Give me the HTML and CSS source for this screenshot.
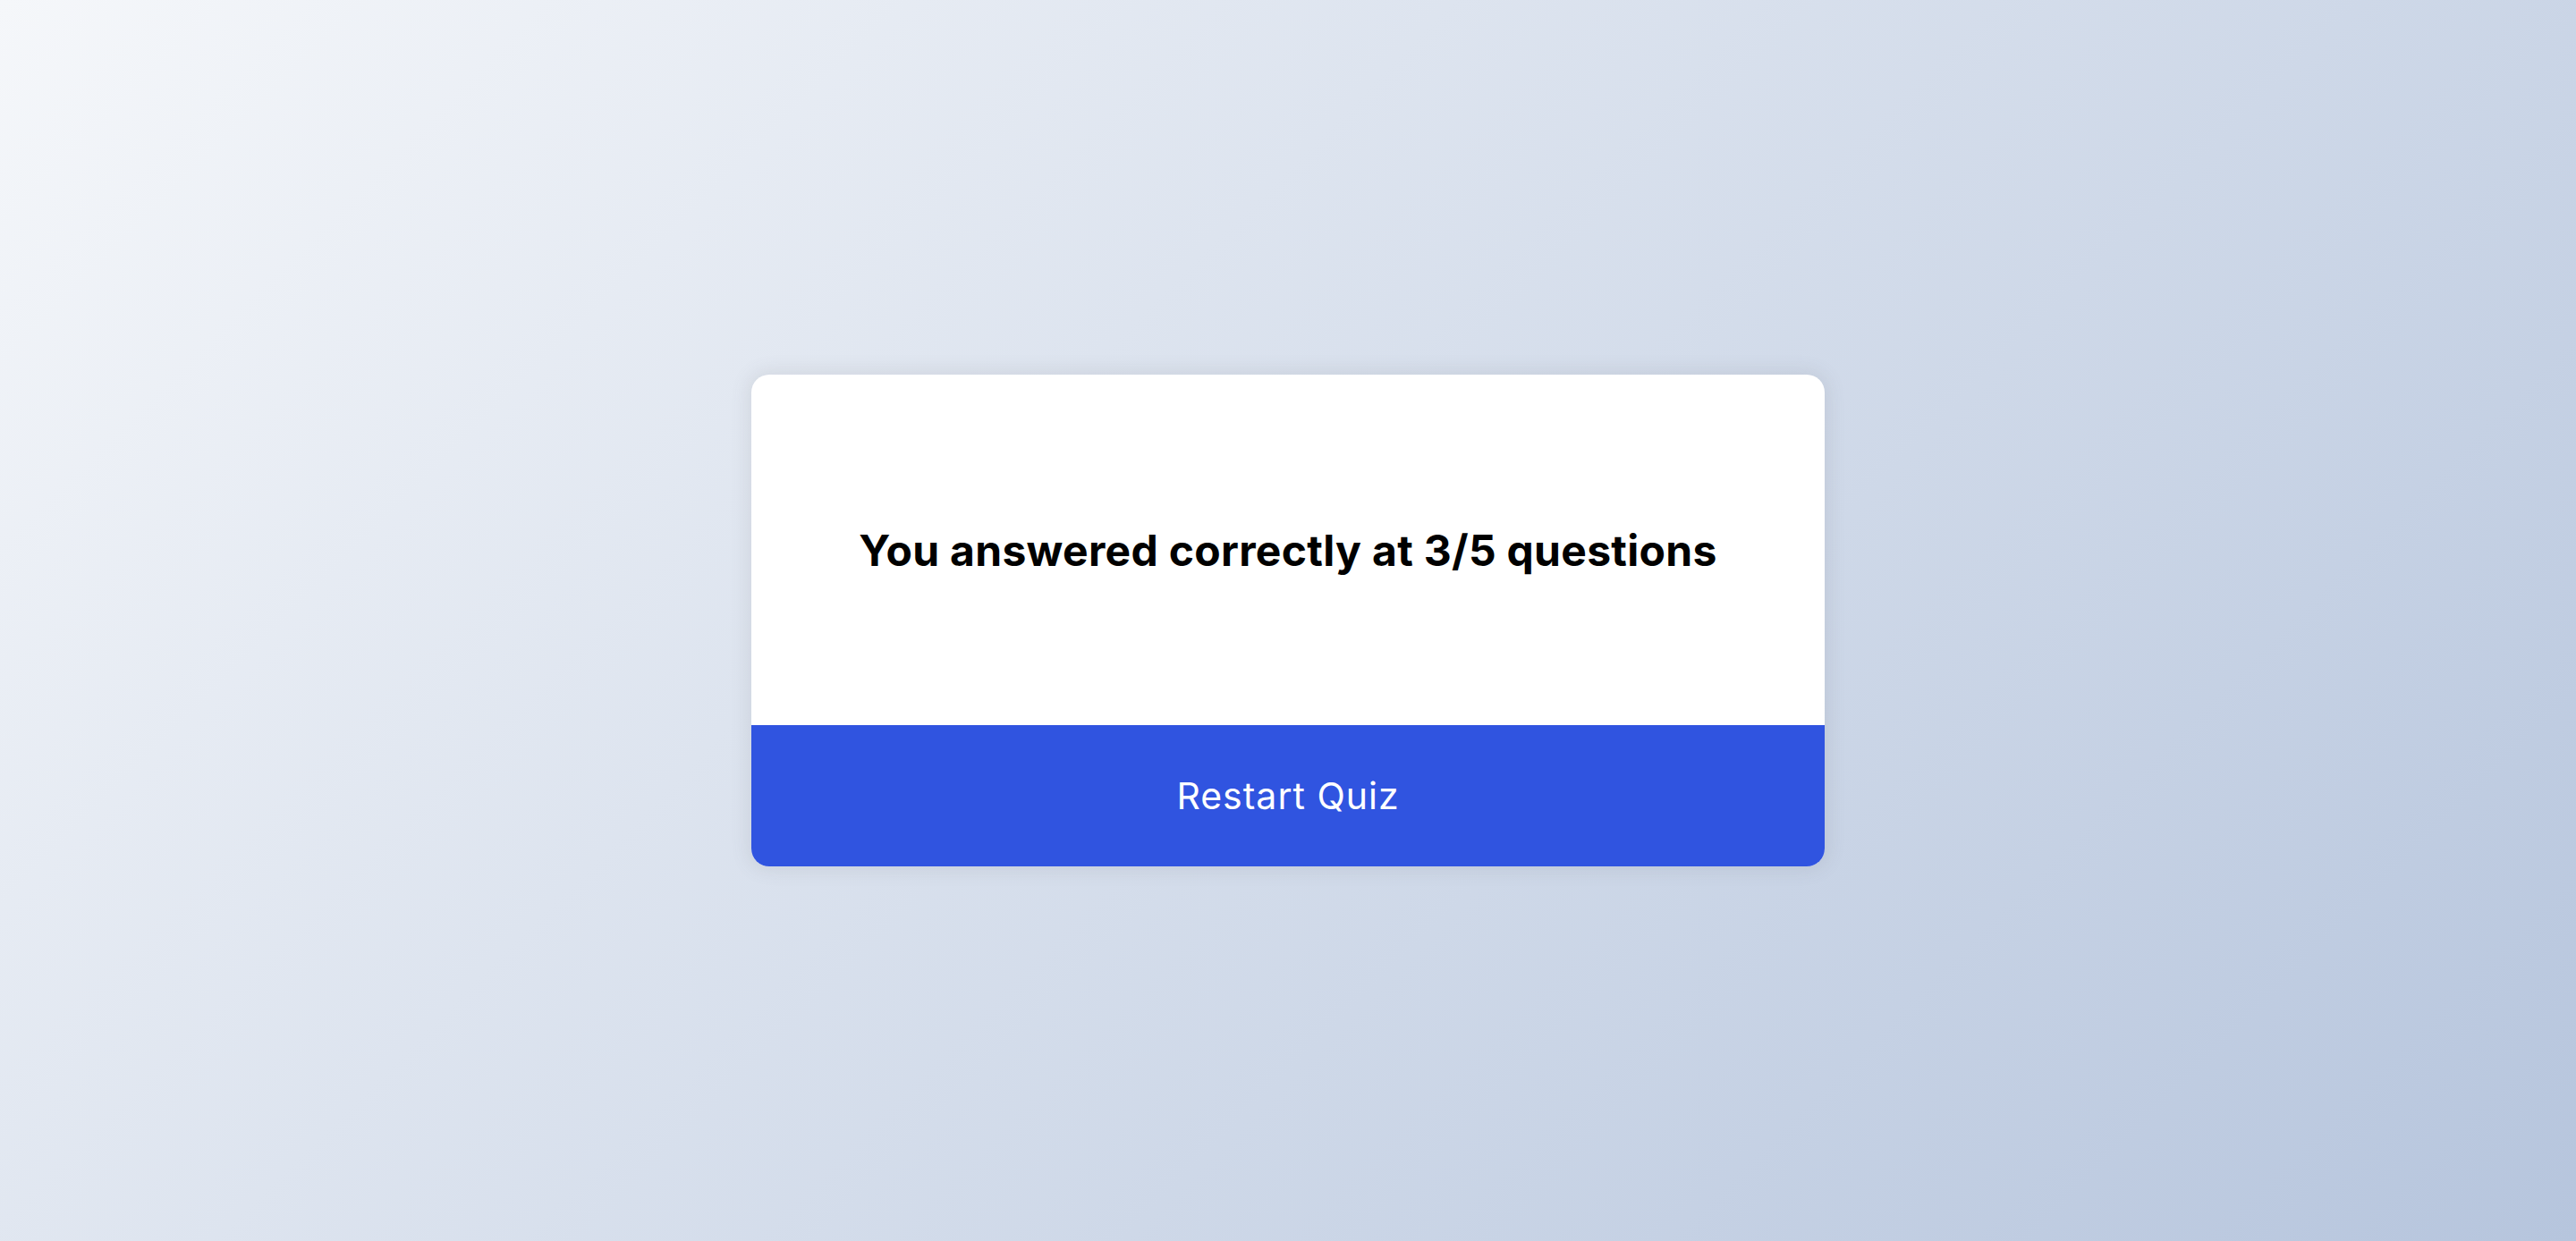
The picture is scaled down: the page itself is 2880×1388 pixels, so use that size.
FILE: index.html
```html
<!DOCTYPE html>
<html lang="en">
<head>
<meta charset="utf-8">
<title>Quiz</title>
<link rel="stylesheet" href="styles.css">
</head>
<body>
<main class="page">
  <section class="card">
    <div class="result">
      <h2 class="result-text">You answered correctly at 3/5 questions</h2>
    </div>
    <button class="restart">Restart Quiz</button>
  </section>
</main>
</body>
</html>
```
FILE: styles.css
```css
* { box-sizing: border-box; }
html, body { margin: 0; padding: 0; }
body {
  min-height: 100vh;
  background-color: #b8c6db;
  background-image: linear-gradient(135deg, #f5f7fa 0%, #b6c5dd 100%);
  font-family: "Inter", "Open Sans", sans-serif;
}
.page {
  min-height: 100vh;
  display: flex;
  align-items: center;
  justify-content: center;
}
.card {
  width: 1200px;
  background: #fff;
  border-radius: 20px;
  overflow: hidden;
  box-shadow: 0 0 20px 4px rgba(100, 100, 111, 0.12);
  display: flex;
  flex-direction: column;
}
.result {
  height: 392px;
  display: flex;
  align-items: center;
  justify-content: center;
}
.result-text {
  margin: 0;
  font-size: 48px;
  font-weight: 700;
  color: #000;
  letter-spacing: 0.3px;
}
.restart {
  height: 158px;
  border: none;
  background: #3054e0;
  color: #fff;
  font-family: inherit;
  font-size: 41px;
  font-weight: 400;
  letter-spacing: 1px;
  cursor: pointer;
}
```
